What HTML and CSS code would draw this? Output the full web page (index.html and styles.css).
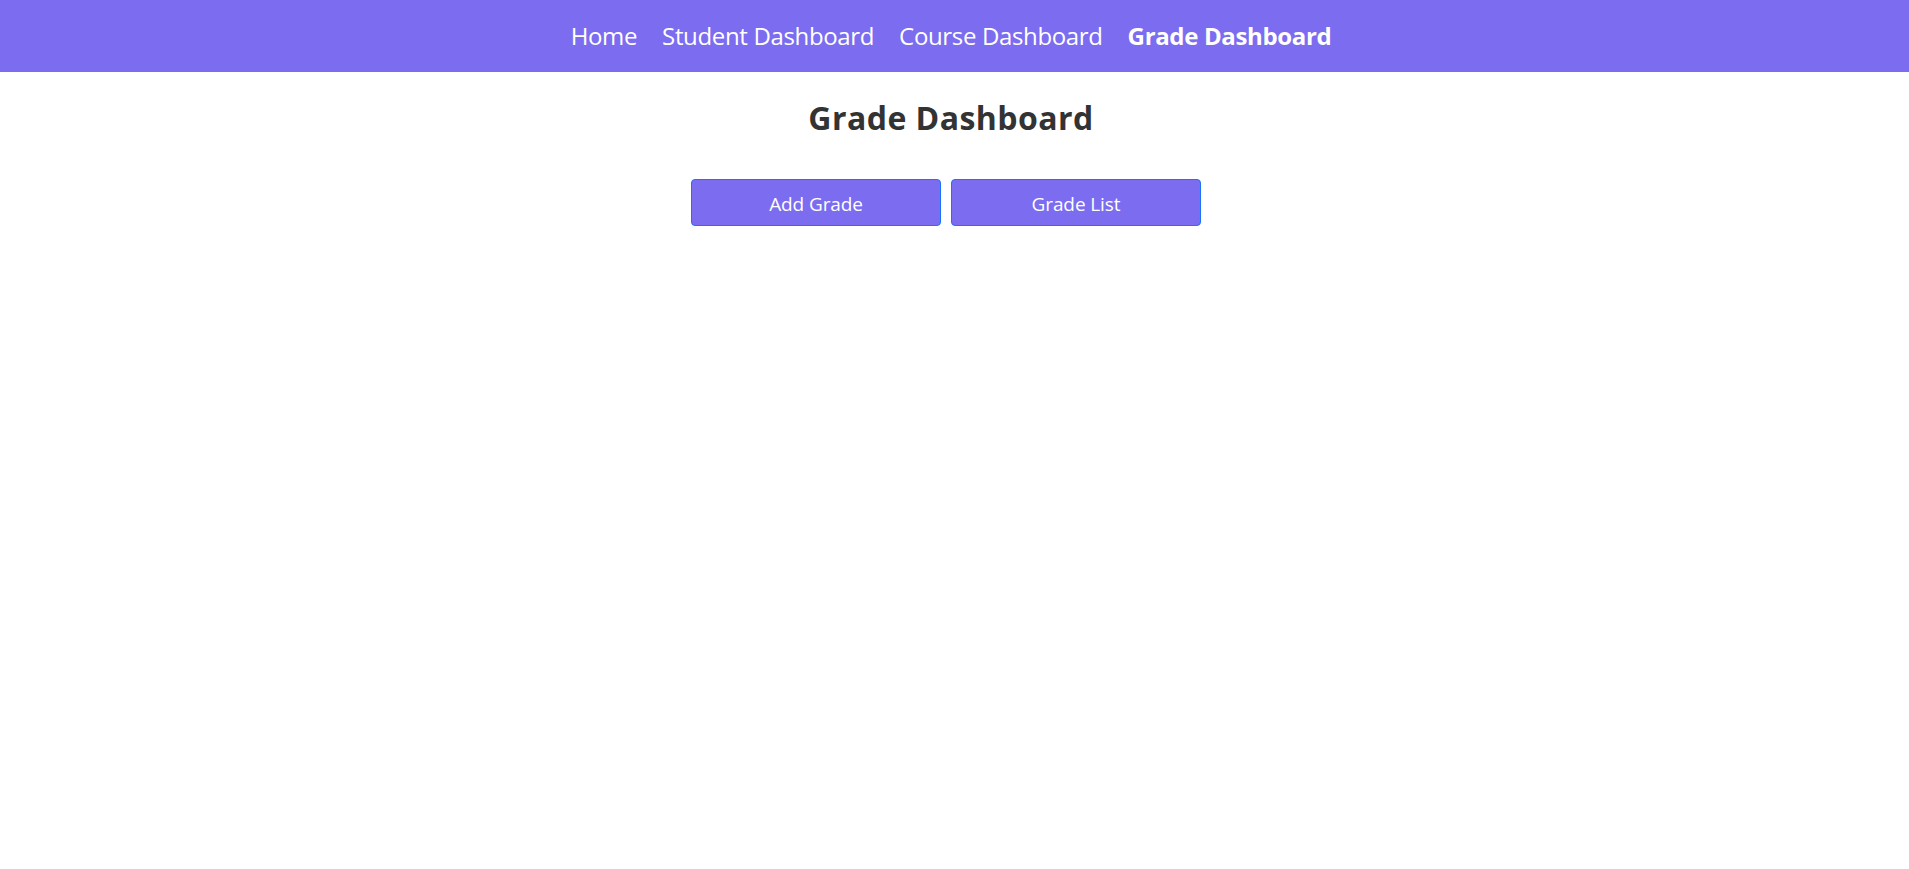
FILE: index.html
```html
<!DOCTYPE html>
<html lang="en">
<head>
<meta charset="utf-8">
<title>Grade Dashboard</title>
<link rel="stylesheet" href="styles.css">
</head>
<body>
<nav class="topnav">
  <a class="nav-link" href="#">Home</a>
  <a class="nav-link" href="#">Student Dashboard</a>
  <a class="nav-link" href="#">Course Dashboard</a>
  <a class="nav-link active" href="#">Grade Dashboard</a>
</nav>
<main class="content">
  <h1 class="title">Grade Dashboard</h1>
  <div class="actions">
    <button class="btn">Add Grade</button>
    <button class="btn">Grade List</button>
  </div>
</main>
</body>
</html>
```
FILE: styles.css
```css
html, body {
  margin: 0;
  padding: 0;
  background: #ffffff;
  font-family: "Open Sans", "Noto Sans", sans-serif;
}

.topnav {
  box-sizing: border-box;
  height: 72px;
  background: #7b6cf0;
  display: flex;
  justify-content: center;
  align-items: center;
  gap: 25px;
  padding-right: 7px;
  padding-bottom: 2px;
}

.nav-link {
  color: #ffffff;
  text-decoration: none;
  font-size: 24px;
  letter-spacing: -0.35px;
}

.nav-link.active {
  font-weight: 700;
}

.content {
  display: flex;
  flex-direction: column;
  align-items: center;
  padding-right: 7px;
}

.title {
  margin: 24px 0 0;
  font-size: 32px;
  line-height: 44px;
  font-weight: 700;
  color: #333333;
  letter-spacing: 0.45px;
}

.actions {
  margin-top: 39px;
  margin-right: 10px;
  display: flex;
  gap: 10px;
}

.btn {
  width: 250px;
  height: 47px;
  padding: 2px 0 0;
  background: #7b6cf0;
  border: 1px solid #1a73f8;
  border-radius: 4px;
  color: #ffffff;
  font-family: "Open Sans", "Noto Sans", sans-serif;
  font-size: 19px;
  letter-spacing: -0.1px;
  cursor: pointer;
}
```
